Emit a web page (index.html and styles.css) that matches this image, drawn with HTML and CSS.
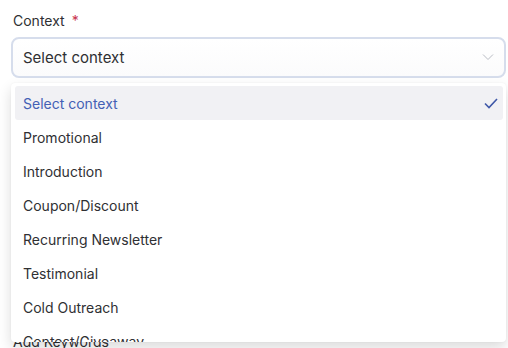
FILE: index.html
```html
<!DOCTYPE html>
<html lang="en">
<head>
  <meta charset="UTF-8" />
  <meta name="viewport" content="width=device-width, initial-scale=1" />
  <title>Context</title>
  <link rel="stylesheet" href="styles.css">
</head>
<body>

<div class="form">
  <div class="field">
    <label class="field-label">Context <span class="required">*</span></label>
    <div class="select-wrap">
      <button class="select-box" type="button">
        <span>Select context</span>
        <svg class="chevron" width="12" height="8" viewBox="0 0 12 8"><path d="M1 1.5 L6 6.5 L11 1.5" fill="none" stroke="#b9bcc4" stroke-width="1"/></svg>
      </button>
      <ul class="menu">
        <li class="option selected">Select context
          <svg class="check" width="14" height="11" viewBox="0 0 14 11"><path d="M1 5.5 L5 9.5 L13 1" fill="none" stroke="#3f58a8" stroke-width="1.6"/></svg>
        </li>
        <li class="option">Promotional</li>
        <li class="option">Introduction</li>
        <li class="option">Coupon/Discount</li>
        <li class="option">Recurring Newsletter</li>
        <li class="option">Testimonial</li>
        <li class="option">Cold Outreach</li>
        <li class="option">Contest/Giveaway</li>
      </ul>
    </div>
  </div>

  <div class="field next">
    <label class="field-label">Add Keywords</label>
  </div>
</div>

</body>
</html>
```

FILE: styles.css
```css
body {
  font-family: Inter, 'Noto Sans', sans-serif;
  background: #fff;
  color: #2f3033;
  margin: 0;
  padding: 0;
  overflow: hidden;
}

.form {
  padding: 11px 2px 0 11px;
}

.field-label {
  display: block;
  font-size: 14px;
  line-height: 20px;
  padding-left: 2px;
  margin-bottom: 6px;
}

.required {
  color: #c8354f;
  margin-left: 3px;
}

.select-wrap {
  position: relative;
}

.select-box {
  width: 100%;
  height: 41px;
  display: flex;
  align-items: center;
  justify-content: space-between;
  padding: 0 10px 1px 10px;
  border: 2px solid #d6ddec;
  border-radius: 8px;
  background: linear-gradient(#ffffff, #fbfbfc);
  font-family: inherit;
  font-size: 15px;
  color: #2f3033;
}

.menu {
  position: absolute;
  top: 46px;
  left: 0;
  right: 0;
  height: 256px;
  margin: 0;
  padding: 3px 3px 0 4px;
  list-style: none;
  background: #fff;
  border-radius: 4px;
  box-shadow: 0 6px 14px rgba(0, 0, 0, 0.14), 0 0 2px rgba(0, 0, 0, 0.06);
  overflow: hidden;
  z-index: 2;
}

.option {
  height: 34px;
  display: flex;
  align-items: center;
  justify-content: space-between;
  padding: 0 5px 0 8px;
  font-size: 14px;
  color: #2f3033;
  border-radius: 3px;
}

.option.selected {
  background: #f1f1f4;
  color: #4360b5;
}

.next {
  margin-top: 254px;
}
```
